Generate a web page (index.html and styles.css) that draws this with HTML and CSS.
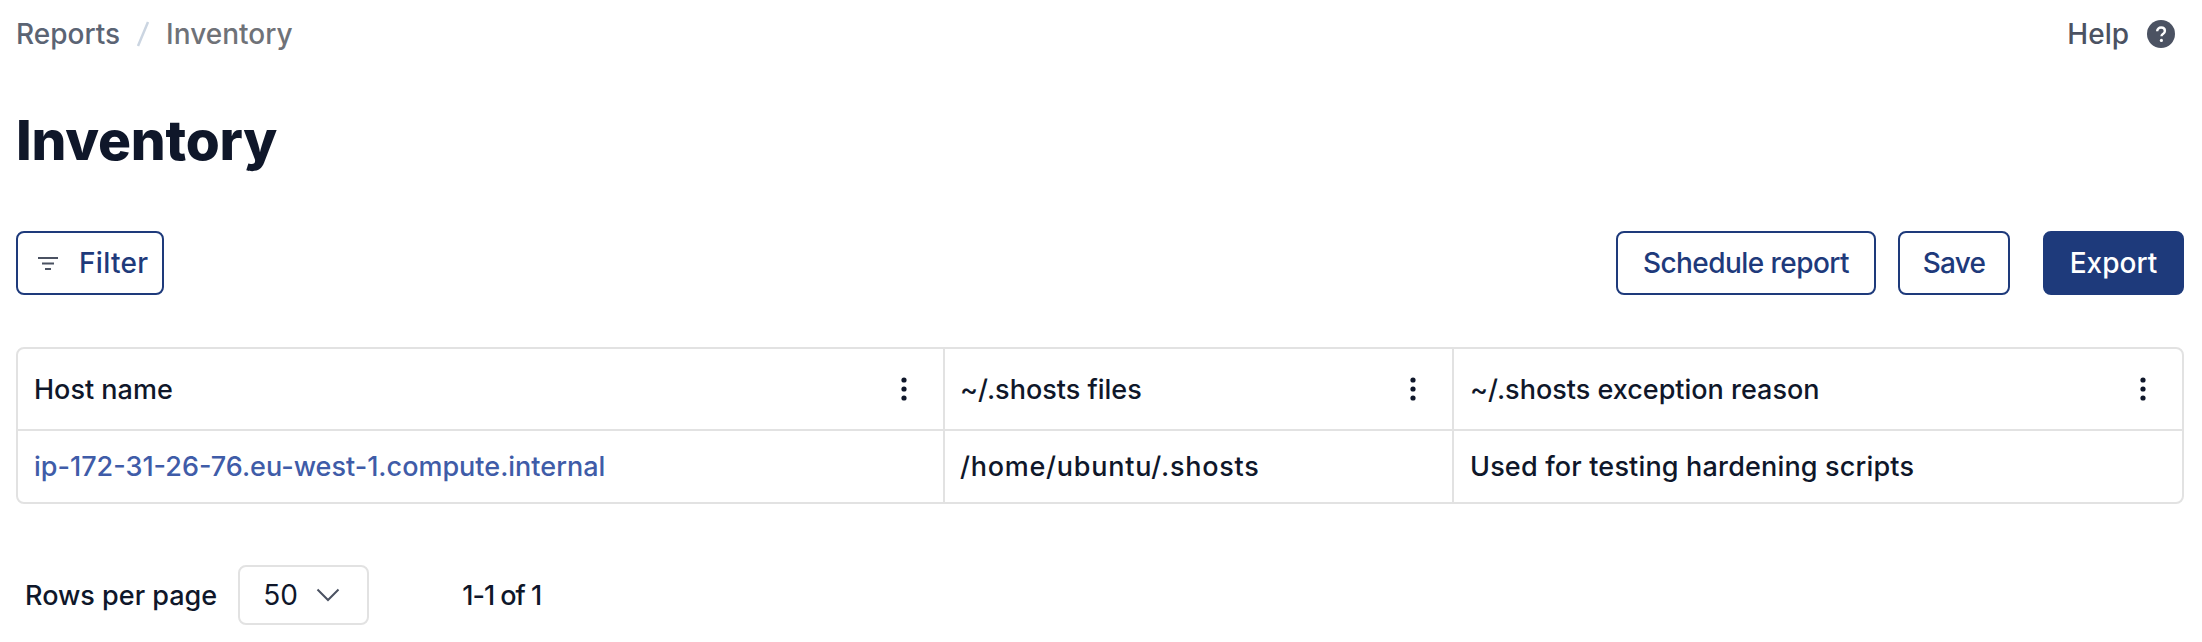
FILE: index.html
```html
<!DOCTYPE html>
<html lang="en">
<head>
<meta charset="utf-8">
<title>Inventory</title>
<link rel="stylesheet" href="styles.css">
</head>
<body>
<header class="topbar">
  <nav class="crumbs">
    <a class="crumb-link">Reports</a>
    <svg class="crumb-sep" width="14" height="26" viewBox="0 0 14 26"><path d="M2 25 12 1" stroke="#cbd5e1" stroke-width="2.5" fill="none"/></svg>
    <span class="crumb-current">Inventory</span>
  </nav>
  <div class="help">
    <span>Help</span>
    <svg width="28" height="28" viewBox="0 0 28 28"><circle cx="14" cy="14" r="14" fill="#4b5262"/><path d="M10.200 11.200c0-2.200 1.700-3.700 3.900-3.700s3.800 1.400 3.800 3.400c0 1.600-.9 2.400-2 3.200-.9.6-1.400 1.100-1.400 2.100" fill="none" stroke="#fff" stroke-width="2.400"/><circle cx="14.400" cy="20.400" r="1.600" fill="#fff"/></svg>
  </div>
</header>
<h1 class="title">Inventory</h1>
<div class="toolbar">
  <button class="btn btn-filter">
    <svg width="20" height="13" viewBox="0 0 20 13"><path d="M0 1h20M4 6.500h12M7 12h6" stroke="#4b5262" stroke-width="1.800" fill="none"/></svg>
    <span>Filter</span>
  </button>
  <div class="actions">
    <button class="btn btn-schedule">Schedule report</button>
    <button class="btn btn-save">Save</button>
    <button class="btn btn-primary">Export</button>
  </div>
</div>
<div class="table">
  <div class="cell head col1"><span>Host name</span>
    <svg class="kebab" width="6" height="24" viewBox="0 0 6 24"><circle cx="3" cy="3" r="2.600"/><circle cx="3" cy="12" r="2.600"/><circle cx="3" cy="21" r="2.600"/></svg></div>
  <div class="cell head col2"><span>~/.shosts files</span>
    <svg class="kebab" width="6" height="24" viewBox="0 0 6 24"><circle cx="3" cy="3" r="2.600"/><circle cx="3" cy="12" r="2.600"/><circle cx="3" cy="21" r="2.600"/></svg></div>
  <div class="cell head col3"><span>~/.shosts exception reason</span>
    <svg class="kebab" width="6" height="24" viewBox="0 0 6 24"><circle cx="3" cy="3" r="2.600"/><circle cx="3" cy="12" r="2.600"/><circle cx="3" cy="21" r="2.600"/></svg></div>
  <div class="cell body col1"><a class="host">ip-172-31-26-76.eu-west-1.compute.internal</a></div>
  <div class="cell body col2 path">/home/ubuntu/.shosts</div>
  <div class="cell body col3">Used for testing hardening scripts</div>
</div>
<div class="pager">
  <span>Rows per page</span>
  <div class="select"><span>50</span>
    <svg width="24" height="14" viewBox="0 0 24 14"><path d="M1.500 1.500 12 12 22.500 1.500" fill="none" stroke="#4b5262" stroke-width="2"/></svg></div>
  <span class="range">1-1 of 1</span>
</div>
</body>
</html>
```
FILE: styles.css
```css
* { box-sizing: border-box; }
html, body { background: #fff; }
body {
  margin: 0;
  padding: 0 18px 0 16px;
  font-family: Inter, "Liberation Sans", sans-serif;
  font-size: 27px;
  color: #0f172a;
  overflow: hidden;
}
.topbar {
  height: 68px;
  display: flex;
  align-items: center;
  justify-content: space-between;
}
.crumbs {
  display: flex;
  align-items: center;
  gap: 16px;
  font-size: 28px;
  font-weight: 500;
}
.crumb-link { color: #5b6474; }
.crumb-current { color: #6f7278; }
.help {
  display: flex;
  align-items: center;
  gap: 18px;
  margin-right: 9px;
  font-size: 28px;
  font-weight: 500;
  color: #4b5262;
}
.title {
  margin: 37px 0 0;
  height: 126px;
  font-size: 55px;
  line-height: 70px;
  font-weight: 800;
  letter-spacing: -0.2px;
  color: #0f172a;
}
.toolbar {
  display: flex;
  align-items: center;
  justify-content: space-between;
  height: 64px;
}
.actions { display: flex; align-items: center; }
.btn {
  height: 64px;
  border: 2px solid #1e3a7b;
  border-radius: 8px;
  background: #fff;
  color: #1e3a7b;
  font: inherit;
  font-size: 28px;
  font-weight: 500;
  display: inline-flex;
  align-items: center;
  justify-content: center;
  padding: 0;
}
.btn-filter { width: 148px; gap: 21px; padding-left: 20px; justify-content: flex-start; letter-spacing: 0.3px; }
.btn-schedule { width: 260px; margin-right: 22px; letter-spacing: -0.55px; }
.btn-save { width: 112px; margin-right: 33px; letter-spacing: -0.8px; }
.btn-primary { width: 141px; background: #1e3a7b; color: #fff; }
.table {
  margin-top: 52px;
  width: 2168px;
  height: 157px;
  display: grid;
  grid-template-columns: 927px 509px 1fr;
  grid-template-rows: 82px 1fr;
  border: 2px solid #e2e2e2;
  border-radius: 8px;
  font-size: 27px;
  font-weight: 500;
}
.cell {
  display: flex;
  align-items: center;
  justify-content: space-between;
  padding: 0 36px 0 16px;
}
.head { border-bottom: 2px solid #e2e2e2; }
.col2 { padding-left: 15px; }
.col1, .col2 { border-right: 2px solid #e2e2e2; }
.kebab { fill: #0f172a; }
.host { color: #3f5ca8; }
.path { letter-spacing: 0.75px; }
.body.col3 { letter-spacing: 0.17px; }
.pager {
  margin-top: 61px;
  display: flex;
  align-items: center;
  padding-left: 9px;
  font-size: 27px;
  font-weight: 500;
}
.select {
  margin-left: 21px;
  width: 131px;
  height: 60px;
  border: 2px solid #e2e2e2;
  border-radius: 8px;
  display: flex;
  align-items: center;
  gap: 18px;
  padding-left: 23px;
  font-size: 28px;
  font-weight: 400;
}
.range { margin-left: 93px; letter-spacing: -1px; }
```
